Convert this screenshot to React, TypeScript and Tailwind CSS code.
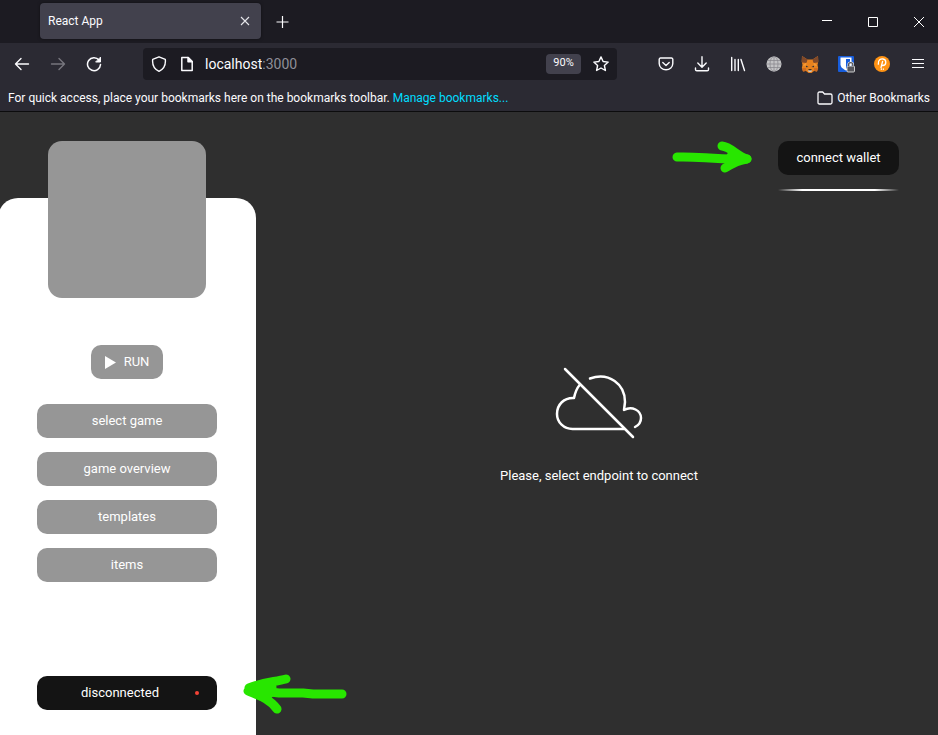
import type { ReactNode } from "react";

const uiFont = "font-['Roboto','Open_Sans',sans-serif]";
const appFont = "font-['Roboto','Liberation_Sans',sans-serif]";

function ToolButton({ label, children, disabled }: { label: string; children: ReactNode; disabled?: boolean }) {
  return (
    <button
      type="button"
      aria-label={label}
      disabled={disabled}
      className="flex h-8 w-9 shrink-0 items-center justify-center text-[#fbfbfe] disabled:text-[#77767e]"
    >
      {children}
    </button>
  );
}

function Icon({ children, width = 1.4 }: { children: ReactNode; width?: number }) {
  return (
    <svg
      width="16"
      height="16"
      viewBox="0 0 16 16"
      fill="none"
      stroke="currentColor"
      strokeWidth={width}
      strokeLinecap="round"
      strokeLinejoin="round"
      className="shrink-0"
    >
      {children}
    </svg>
  );
}

function TabStrip() {
  return (
    <div className="flex h-[43px] items-center bg-[#1c1b22] pr-3.5 pl-10">
      <div className="mb-px flex h-9 w-[221px] items-center justify-between rounded bg-[#42414d] pr-2.5 pl-2 shadow-[0_0_3px_rgba(0,0,0,0.5)]">
        <span className="text-xs">React App</span>
        <button type="button" aria-label="Close tab">
          <svg width="12" height="12" viewBox="0 0 12 12" stroke="#e6e6ea" strokeWidth="1.1">
            <path d="M2 2l8 8M10 2l-8 8" />
          </svg>
        </button>
      </div>
      <button type="button" aria-label="New tab" className="ml-3.5">
        <svg width="14" height="14" viewBox="0 0 14 14" stroke="#fbfbfe" strokeWidth="1.2">
          <path d="M7.500 1v12M1.500 7h12" />
        </svg>
      </button>
      <div className="ml-auto flex items-center gap-9">
        <button type="button" aria-label="Minimize">
          <svg width="10" height="10" viewBox="0 0 10 10" stroke="#fff">
            <path d="M0 3.5h10" />
          </svg>
        </button>
        <button type="button" aria-label="Maximize">
          <svg width="10" height="10" viewBox="0 0 10 10" stroke="#fff" fill="none">
            <path d="M.5.5h9v9h-9z" />
          </svg>
        </button>
        <button type="button" aria-label="Close window">
          <svg width="10" height="10" viewBox="0 0 10 10" stroke="#fff">
            <path d="M0 0l10 10M10 0L0 10" />
          </svg>
        </button>
      </div>
    </div>
  );
}

function AddressBar() {
  return (
    <div className="mx-[31px] flex h-8 min-w-0 flex-1 items-center rounded bg-[#1c1b22] px-2 text-[#fbfbfe]">
      <button type="button" aria-label="Tracking protection">
        <Icon>
          <path d="M8 .8l6.3 2.500c.5 4.600-1 9.600-6.300 12-5.300-2.400-6.800-7.400-6.300-12z" />
        </Icon>
      </button>
      <button type="button" aria-label="Site information" className="ml-3">
        <Icon width={1.5}>
          <path d="M2.800 1.500h6.400l4 4v9H2.800z" />
          <path d="M9 1.500v4.200h4.200z" fill="currentColor" />
        </Icon>
      </button>
      <label className="flex min-w-0 flex-1 items-center pl-2.5 text-sm text-[#8f8f98]">
        <input
          aria-label="Address"
          defaultValue="localhost"
          className="field-sizing-content bg-transparent text-[#fbfbfe] outline-none"
        />
        <span>:3000</span>
      </label>
      <button type="button" className="flex h-5 w-[35px] items-center justify-center rounded-sm bg-[#42414d] text-[11px]">
        90%
      </button>
      <button type="button" aria-label="Bookmark this page" className="ml-3">
        <Icon>
          <path d="M8 .9l2.100 4.600 5.100.6-3.800 3.400 1 5L8 12l-4.400 2.500 1-5L.8 6.100l5.100-.6z" />
        </Icon>
      </button>
    </div>
  );
}

function FoxLogo() {
  return (
    <svg width="18" height="18" viewBox="0 0 18 18">
      <path d="M1 1L6.500 4.500h5L17 1l.3 5.500-.8 3.500.7 3-1.200 3.500-3-.5-2.500 2h-3L5 16l-3 .5L.8 13l.7-3-.8-3.500z" fill="#e8821e" />
      <path d="M1 1l5.500 3.500L5.500 8 .9 7.500zM17 1l-5.500 3.500 1 3.500 4.600-.5z" fill="#80492a" />
      <path d="M5.500 7.500L1.500 10.500 5 11zM12.500 7.500l4 3-3.500.5z" fill="#f69a36" />
      <path d="M4.800 10.500l2.700 1.500-2.300.3zM13.200 10.500L10.500 12l2.300.3z" fill="#26303f" />
      <path d="M7 15h4l-.5 2H7.500z" fill="#d8c4b2" />
      <path d="M7.600 14.300h2.800l.3 1H7.300z" fill="#161616" />
      <path d="M1 13.300l3.800-.3.400 2.800-3.200.6zM17 13.300l-3.800-.3-.4 2.800 3.200.6z" fill="#cc6a20" />
    </svg>
  );
}

function ShieldLogo() {
  return (
    <svg width="18" height="18" viewBox="0 0 18 18">
      <rect x="1" y="1" width="16" height="16" rx="1" fill="#175ddc" />
      <path d="M3.500 2.500h11v6.800c0 3-2.500 4.700-5.500 6.200-3-1.500-5.500-3.200-5.500-6.200z" fill="#fff" />
      <path d="M9 4h4v5c0 2-1.600 3.300-4 4.800z" fill="#175ddc" />
      <rect x="10" y="11" width="7.500" height="6" rx="1" fill="#56565c" stroke="#eee" strokeWidth=".8" />
      <path d="M11.600 10.800V9.800a2.100 2.100 0 0 1 4.200 0v1" fill="none" stroke="#eee" strokeWidth="2.400" />
      <path d="M11.600 11V9.800a2.100 2.100 0 0 1 4.200 0V11" fill="none" stroke="#56565c" strokeWidth="1.300" />
    </svg>
  );
}

function NavBar() {
  return (
    <div className="flex h-[41px] items-center bg-[#2b2a33] pr-0.5 pl-1">
      <ToolButton label="Back">
        <Icon>
          <path d="M1.500 8h13M7 2.500L1.500 8 7 13.500" />
        </Icon>
      </ToolButton>
      <ToolButton label="Forward" disabled>
        <Icon>
          <path d="M1.500 8h13M9 2.500L14.500 8 9 13.500" />
        </Icon>
      </ToolButton>
      <ToolButton label="Reload">
        <Icon width={1.5}>
          <path d="M13 4A6.500 6.500 0 1 0 14.500 8.600" />
          <path d="M14.500 1.500v4.500H10z" fill="currentColor" strokeWidth="1" />
        </Icon>
      </ToolButton>
      <AddressBar />
      <ToolButton label="Save to Pocket">
        <Icon>
          <path d="M2.500 2h11A1.300 1.300 0 0 1 14.800 3.300V7.500a6.800 6.300 0 0 1-13.600 0V3.300A1.300 1.300 0 0 1 2.500 2z" />
          <path d="M4.800 6.500L8 9.500l3.200-3" />
        </Icon>
      </ToolButton>
      <ToolButton label="Downloads">
        <Icon>
          <path d="M8 .8v10.200M3.800 7L8 11.200 12.200 7M1.500 12v1.500c0 .8.500 1.300 1.300 1.300h10.400c.8 0 1.300-.5 1.300-1.300V12" />
        </Icon>
      </ToolButton>
      <ToolButton label="Library">
        <Icon>
          <path d="M1.700 1.500v13M5 3.500v11M8.300 3.500v11M11 3.500l3.500 11" />
        </Icon>
      </ToolButton>
      <ToolButton label="Web extension">
        <svg width="16" height="16" viewBox="0 0 16 16" fill="#c3c3c5" stroke="#8a898f" strokeWidth=".8">
          <circle cx="8" cy="8" r="7.500" stroke="none" />
          <path d="M8 .5v15M.5 8h15M1.800 4.500h12.400M1.800 11.500h12.400" />
          <ellipse cx="8" cy="8" rx="4" ry="7.500" fill="none" />
        </svg>
      </ToolButton>
      <ToolButton label="Wallet extension">
        <FoxLogo />
      </ToolButton>
      <ToolButton label="Password manager">
        <ShieldLogo />
      </ToolButton>
      <ToolButton label="Wallet">
        <svg width="16" height="16" viewBox="0 0 16 16" fill="none" stroke="#fff" strokeWidth="1.300" strokeLinecap="round">
          <circle cx="8" cy="8" r="8" fill="#ff9314" stroke="none" />
          <path d="M4.300 8.200C3.800 3.500 7 2.800 9 3C12.800 3.400 12.800 9.500 8.600 9.500H7.600M8.600 5.300L7 11.500M7.300 13.300l.1-.3M9.300 13.300l.1-.3" />
        </svg>
      </ToolButton>
      <ToolButton label="Menu">
        <svg width="12" height="12" viewBox="0 0 12 12" stroke="currentColor">
          <path d="M0 1.500h12M0 5.500h12M0 9.500h12" />
        </svg>
      </ToolButton>
    </div>
  );
}

function BookmarksBar() {
  return (
    <div className="flex h-7 items-center justify-between border-b border-[#0c0c0d] bg-[#2b2a33] px-2 text-xs whitespace-nowrap">
      <p>
        For quick access, place your bookmarks here on the bookmarks toolbar.{" "}
        <a href="#bookmarks" className="text-[#00ddff]">
          Manage bookmarks...
        </a>
      </p>
      <button type="button" className="flex items-center gap-1">
        <svg width="16" height="14" viewBox="0 0 16 14" fill="none" stroke="#fbfbfe" strokeWidth="1.300" strokeLinejoin="round">
          <path d="M1 11.500v-9C1 1.500 1.500 1 2.500 1h3.200l1.800 2h6c1 0 1.500.5 1.500 1.500v7c0 1-.5 1.500-1.500 1.500h-11C1.500 13 1 12.500 1 11.500z" />
        </svg>
        Other Bookmarks
      </button>
    </div>
  );
}

function GreyButton({ children }: { children: ReactNode }) {
  return (
    <button type="button" className="h-[34px] w-full rounded-[10px] bg-[#969696] text-white">
      {children}
    </button>
  );
}

function Sidebar() {
  return (
    <aside className="relative z-10 -ml-0.5 flex w-[258px] shrink-0 flex-col pt-[86px]">
      <div className="flex flex-1 flex-col items-center rounded-t-[20px] bg-white px-[39px] pb-[25px]">
        <div className="-mt-[57px] h-[157px] w-[158px] shrink-0 rounded-[14px] bg-[#969696]" />
        <button
          type="button"
          className="mt-[47px] flex h-[34px] w-[72px] shrink-0 items-center justify-center gap-2 rounded-[10px] bg-[#969696] text-white"
        >
          <svg width="11" height="13" viewBox="0 0 11 13" fill="#fff">
            <path d="M0 0l11 6.500L0 13z" />
          </svg>
          RUN
        </button>
        <nav className="mt-[25px] mb-6 flex w-full flex-col gap-3.5">
          <GreyButton>select game</GreyButton>
          <GreyButton>game overview</GreyButton>
          <GreyButton>templates</GreyButton>
          <GreyButton>items</GreyButton>
        </nav>
        <button
          type="button"
          className="mt-auto flex h-[34px] w-full shrink-0 items-center rounded-[10px] bg-[#141414] pr-[18px] pl-2 text-white"
        >
          <span className="flex-1">disconnected</span>
          <span className="size-1 rounded-full bg-[#f44336]" />
        </button>
      </div>
      <svg
        width="106"
        height="44"
        viewBox="0 0 106 44"
        fill="none"
        stroke="#28e600"
        strokeWidth="9"
        strokeLinecap="round"
        strokeLinejoin="round"
        className="absolute -right-[91px] bottom-[21px]"
      >
        <path d="M101 24H72L62 23H38L12 20" />
        <path d="M8 18C22 12 34 12 45 9M7 21C16 25 28 28 36 39M9 20l22-3-2 6z" />
      </svg>
    </aside>
  );
}

function MainArea() {
  return (
    <main className="flex min-w-0 flex-1 flex-col">
      <header className="flex items-start justify-end pt-[29px] pr-[39px]">
        <svg
          width="82"
          height="34"
          viewBox="0 0 82 34"
          fill="none"
          stroke="#28e600"
          strokeWidth="9"
          strokeLinecap="round"
          strokeLinejoin="round"
          className="mr-[25px]"
        >
          <path d="M6 16C28 15 42 19 76 18" />
          <path d="M51 5C60 6 66 15 76 18C68 19 62 22 54 27M60 15l12 3" />
        </svg>
        <div>
          <button type="button" className="h-[34px] w-[121px] rounded-[10px] bg-[#141414] text-white">
            connect wallet
          </button>
          <div className="mt-3.5 h-0.5 bg-[linear-gradient(to_right,transparent,white_20%,white_80%,transparent)]" />
        </div>
      </header>
      <section className="flex flex-col items-center pt-44 pl-1">
        <svg
          width="88"
          height="72"
          viewBox="0 0 88 72"
          fill="none"
          stroke="#fff"
          strokeWidth="2.500"
          strokeLinecap="round"
          strokeLinejoin="round"
        >
          <path d="M10 2L78 70" />
          <path d="M25 17.500C22 21 20 26 19 31C9 30.500 2 37.500 2 47C2 55.500 9 62 17.500 62H69" />
          <path d="M35 11.500C54 5 70 17 70 35L69 43C77 38.500 86 43.500 86 51C86 55 84 58 80 60" />
        </svg>
        <p className={`mt-[27px] leading-5 text-white ${uiFont}`}>Please, select endpoint to connect</p>
      </section>
    </main>
  );
}

export default function App() {
  return (
    <div className="flex min-h-screen flex-col overflow-hidden bg-[#2f2f2f]">
      <div className={`text-[#fbfbfe] ${uiFont}`}>
        <TabStrip />
        <NavBar />
        <BookmarksBar />
      </div>
      <div className={`flex flex-1 text-[13px] ${appFont}`}>
        <Sidebar />
        <MainArea />
      </div>
    </div>
  );
}
